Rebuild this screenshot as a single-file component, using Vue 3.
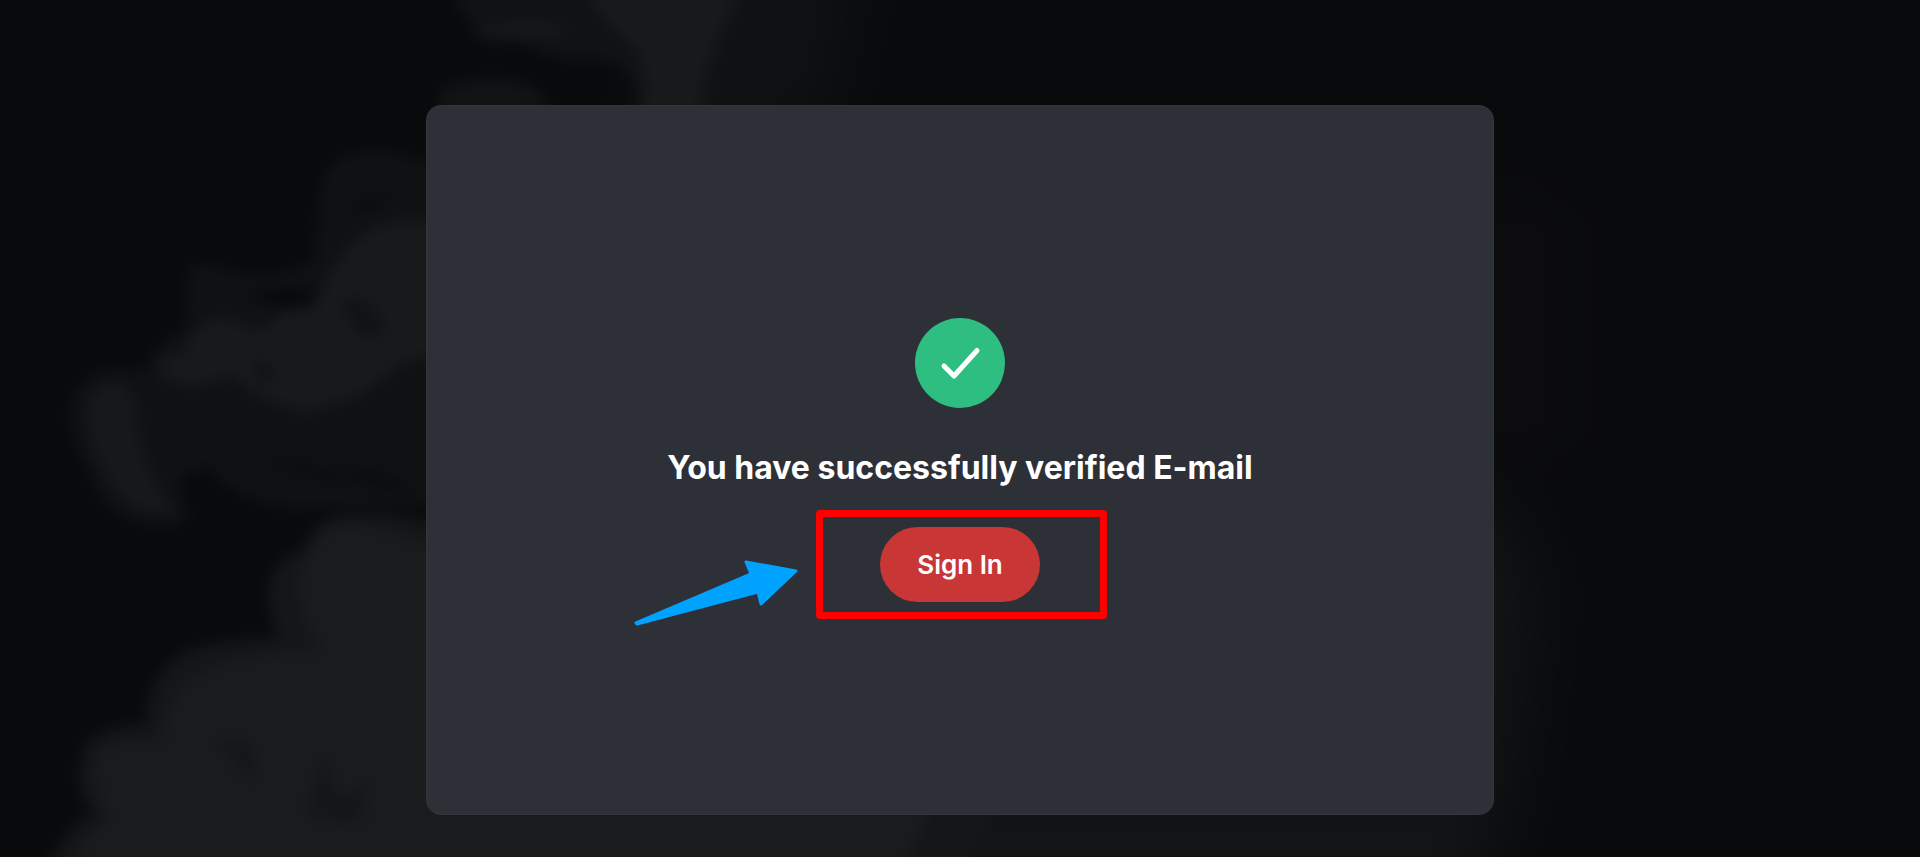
<script setup>
const title = 'You have successfully verified E-mail'
</script>

<template>
  <main class="page">
    <svg class="smoke" viewBox="0 0 1920 857" preserveAspectRatio="xMidYMid slice" aria-hidden="true">
      <defs>
        <filter id="soft" x="0" y="0" width="100%" height="100%" color-interpolation-filters="sRGB"><feGaussianBlur stdDeviation="7" /></filter>
        <filter id="wide" x="0" y="0" width="100%" height="100%" color-interpolation-filters="sRGB"><feGaussianBlur stdDeviation="32" /></filter>
      </defs>
      <g filter="url(#soft)">
        <g filter="url(#wide)">
          <rect x="-100" y="-100" width="2120" height="1057" fill="#090a0c" />
          <path d="M680 -50H860L820 130H640Z" fill="#101112" />
          <path d="M1460 200Q1560 180 1570 240L1570 430Q1530 480 1460 440Z" fill="#0c0c0e" />
          <path d="M1440 480Q1540 520 1530 620L1510 780L1460 940H900V780H1440Z" fill="#131415" />
        </g>
        <path d="M455 -20H750L730 40Q715 65 716 115H640Q640 65 600 60Q550 62 530 44L478 38Q470 20 455 0Z" fill="#111213" />
        <path d="M590 -20H745Q720 25 712 55Q700 80 702 115H640Q650 70 635 48Q610 25 590 0Z" fill="#18191a" />
        <path d="M478 32Q530 12 575 30Q540 40 478 38Z" fill="#17181a" />
        <path d="M440 90Q500 66 540 92L550 112H440Z" fill="#121314" />
        <path d="M440 170Q400 146 350 154Q322 166 320 195L314 262Q280 278 240 274Q210 260 190 267L185 330Q148 346 150 370L110 369Q72 380 70 412Q70 440 90 470Q96 502 126 518Q160 532 188 520L184 500Q160 480 210 466Q230 500 290 508L440 505Z" fill="#101112" />
        <path d="M440 225Q390 210 350 245L325 280Q320 320 290 305Q270 330 250 330Q220 305 190 335L184 355Q155 350 160 375Q190 395 230 375Q265 405 310 412L360 395L400 365L440 350Z" fill="#18191a" />
        <path d="M90 395Q118 370 135 400Q140 450 150 470Q160 500 178 512Q130 520 105 475Q80 430 90 395Z" fill="#17181a" />
        <path d="M440 525Q350 500 315 528L304 550Q270 560 268 595L276 639Q215 638 178 656Q146 680 146 726Q108 724 86 744Q74 774 84 800L95 812Q60 830 45 880H960L1000 805H440Z" fill="#151617" />
        <path d="M440 550Q350 510 320 535Q290 570 305 620L320 650Q225 655 190 680Q165 700 160 745Q100 735 95 765Q95 790 110 820Q80 840 65 880H900L930 805H440Z" fill="#1a1b1c" />
        <path d="M245 294L282 288L316 290L305 308Q280 310 245 294Z" fill="#08090b" />
        <path d="M340 300L365 298L388 330L370 340L350 325Z" fill="#121314" />
        <path d="M255 360L272 366L270 384L255 380Z" fill="#111213" />
        <path d="M242 460L300 462Q350 480 370 468L410 485V495Q360 480 320 480Q280 466 242 460Z" fill="#0b0c0e" />
        <path d="M350 205L385 193L390 200L352 214Z" fill="#0a0b0c" />
        <path d="M325 755L340 800L370 780L360 825L305 815Z" fill="#151617" />
        <path d="M215 740L250 742L258 785L235 765Z" fill="#151617" />
      </g>
    </svg>

    <section class="card">
      <svg class="status" viewBox="0 0 90 90" aria-hidden="true">
        <circle cx="45" cy="45" r="45" fill="#2fbe82" />
        <path d="M29 48L39 58L62 32.500" fill="none" stroke="#fff" stroke-width="5" stroke-linecap="round" stroke-linejoin="round" />
      </svg>
      <h1 class="title">{{ title }}</h1>
      <div class="action">
        <button class="signin" type="button">Sign In</button>
        <span class="frame"></span>
        <svg class="arrow" viewBox="0 0 168 72" aria-hidden="true">
          <path d="M3 66L118 17L113 5L163 14L128 47L125 35L4 67Z" fill="#00a2ff" stroke="#00a2ff" stroke-width="3" stroke-linejoin="round" />
        </svg>
      </div>
    </section>
  </main>
</template>

<style>
body {
  background: #090a0c;
}
</style>

<style scoped>
.page {
  position: relative;
  box-sizing: border-box;
  min-height: 100vh;
  padding: 105px 24px 42px;
  display: flex;
  justify-content: center;
  overflow: hidden;
  background: #090a0c;
  font-family: Inter, "Open Sans", sans-serif;
}

.smoke {
  position: absolute;
  inset: 0;
  width: 100%;
  height: 100%;
}

.card {
  position: relative;
  box-sizing: border-box;
  width: 100%;
  max-width: 1068px;
  padding: 40px;
  display: flex;
  flex-direction: column;
  align-items: center;
  justify-content: center;
  gap: 40px;
  border: 1px solid #35363b;
  border-radius: 15px;
  background: #2e3037;
}

.status {
  width: 90px;
  height: 90px;
}

.title {
  margin: 0;
  color: #fff;
  font-size: 32px;
  line-height: 39px;
  font-weight: 700;
  text-align: center;
}

.action {
  position: relative;
}

.signin {
  display: block;
  min-width: 160px;
  height: 75px;
  padding: 0 36px;
  border: 0;
  border-radius: 38px;
  background: #c93636;
  color: #fff;
  font-family: inherit;
  font-size: 26px;
  font-weight: 600;
  white-space: nowrap;
  cursor: pointer;
}

.frame {
  position: absolute;
  inset: -17px -67px -17px -64px;
  border: 7px solid #fe0000;
  border-radius: 4px;
  pointer-events: none;
}

.arrow {
  position: absolute;
  right: 239px;
  top: 30px;
  width: 168px;
  height: 72px;
  pointer-events: none;
}
</style>
